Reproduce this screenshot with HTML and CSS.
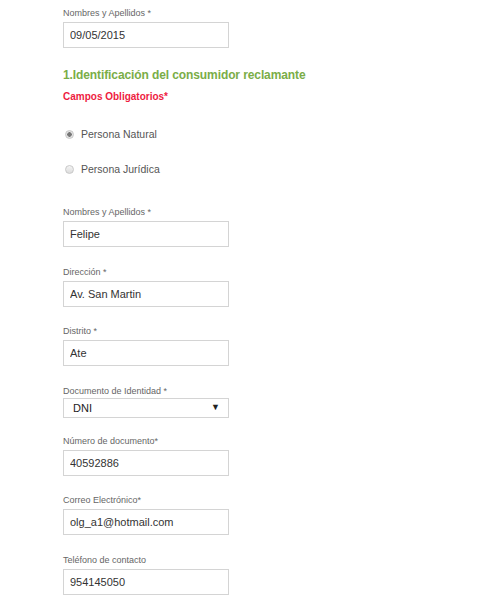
FILE: index.html
```html
<!DOCTYPE html>
<html lang="es">
<head>
  <meta charset="UTF-8">
  <title>Libro de Reclamaciones</title>
  <link rel="stylesheet" href="styles.css">
</head>
<body>
  <form class="reclamo">
    <div class="field">
      <label>Nombres y Apellidos *</label>
      <input type="text" value="09/05/2015">
    </div>

    <h2 class="section-title">1.Identificación del consumidor reclamante</h2>
    <p class="required">Campos Obligatorios*</p>

    <div class="radios">
      <label class="radio"><input type="radio" name="tipo" checked> Persona Natural</label>
      <label class="radio"><input type="radio" name="tipo"> Persona Jurídica</label>
    </div>

    <div class="field">
      <label>Nombres y Apellidos *</label>
      <input type="text" value="Felipe">
    </div>
    <div class="field">
      <label>Dirección *</label>
      <input type="text" value="Av. San Martin">
    </div>
    <div class="field">
      <label>Distrito *</label>
      <input type="text" value="Ate">
    </div>
    <div class="field field-select">
      <label>Documento de Identidad *</label>
      <div class="select-wrap">
        <select>
          <option>DNI</option>
          <option>Carnet de Extranjería</option>
        </select>
        <span class="arrow">▼</span>
      </div>
    </div>
    <div class="field">
      <label>Número de documento*</label>
      <input type="text" value="40592886">
    </div>
    <div class="field">
      <label>Correo Electrónico*</label>
      <input type="text" value="olg_a1@hotmail.com">
    </div>
    <div class="field">
      <label>Teléfono de contacto</label>
      <input type="text" value="954145050">
    </div>
  </form>
</body>
</html>
```

FILE: styles.css
```css
body {
  margin: 0;
  background: #ffffff;
  font-family: 'Liberation Sans', Arial, sans-serif;
  color: #555;
}

.reclamo {
  padding: 6px 0 0 63px;
}

.field {
  margin-bottom: 17.5px;
}

.field-select {
  margin-bottom: 16px;
}

.field label {
  display: block;
  font-size: 9px;
  line-height: 14px;
  color: #666;
  margin-bottom: 2px;
}

.field-select label {
  margin-bottom: 0;
}

.field input {
  box-sizing: border-box;
  width: 166px;
  height: 26px;
  padding: 0 6px;
  border: 1px solid #d4d4d4;
  font-family: inherit;
  font-size: 11px;
  color: #333;
  outline: none;
}

.section-title {
  margin: 18px 0 0;
  font-size: 12px;
  line-height: 18px;
  letter-spacing: -0.1px;
  color: #7aad47;
}

.required {
  margin: 6px 0 0;
  font-size: 10px;
  font-weight: bold;
  line-height: 14px;
  color: #ee1c3f;
}

.radios {
  padding: 23px 0 29px 0;
  display: flex;
  flex-direction: column;
  gap: 21px;
}

.radio {
  display: flex;
  align-items: center;
  gap: 7px;
  font-size: 10.5px;
  line-height: 14px;
  color: #555;
}

.radio input {
  appearance: none;
  margin: 0 0 0 2px;
  width: 9px;
  height: 9px;
  border: 1px solid #c8c8c8;
  border-radius: 50%;
  background: linear-gradient(#f4f4f4, #dcdcdc);
}

.radio input:checked {
  background: radial-gradient(circle, #777 0 2px, #e4e4e4 2.5px);
}

.select-wrap {
  position: relative;
  width: 166px;
}

.select-wrap select {
  appearance: none;
  box-sizing: border-box;
  width: 166px;
  height: 20px;
  padding: 0 9px;
  border: 1px solid #d4d4d4;
  border-radius: 0;
  background: #fff;
  font-family: inherit;
  font-size: 11px;
  color: #222;
}

.arrow {
  position: absolute;
  right: 9px;
  top: 4px;
  font-size: 9px;
  color: #222;
  pointer-events: none;
}
```
